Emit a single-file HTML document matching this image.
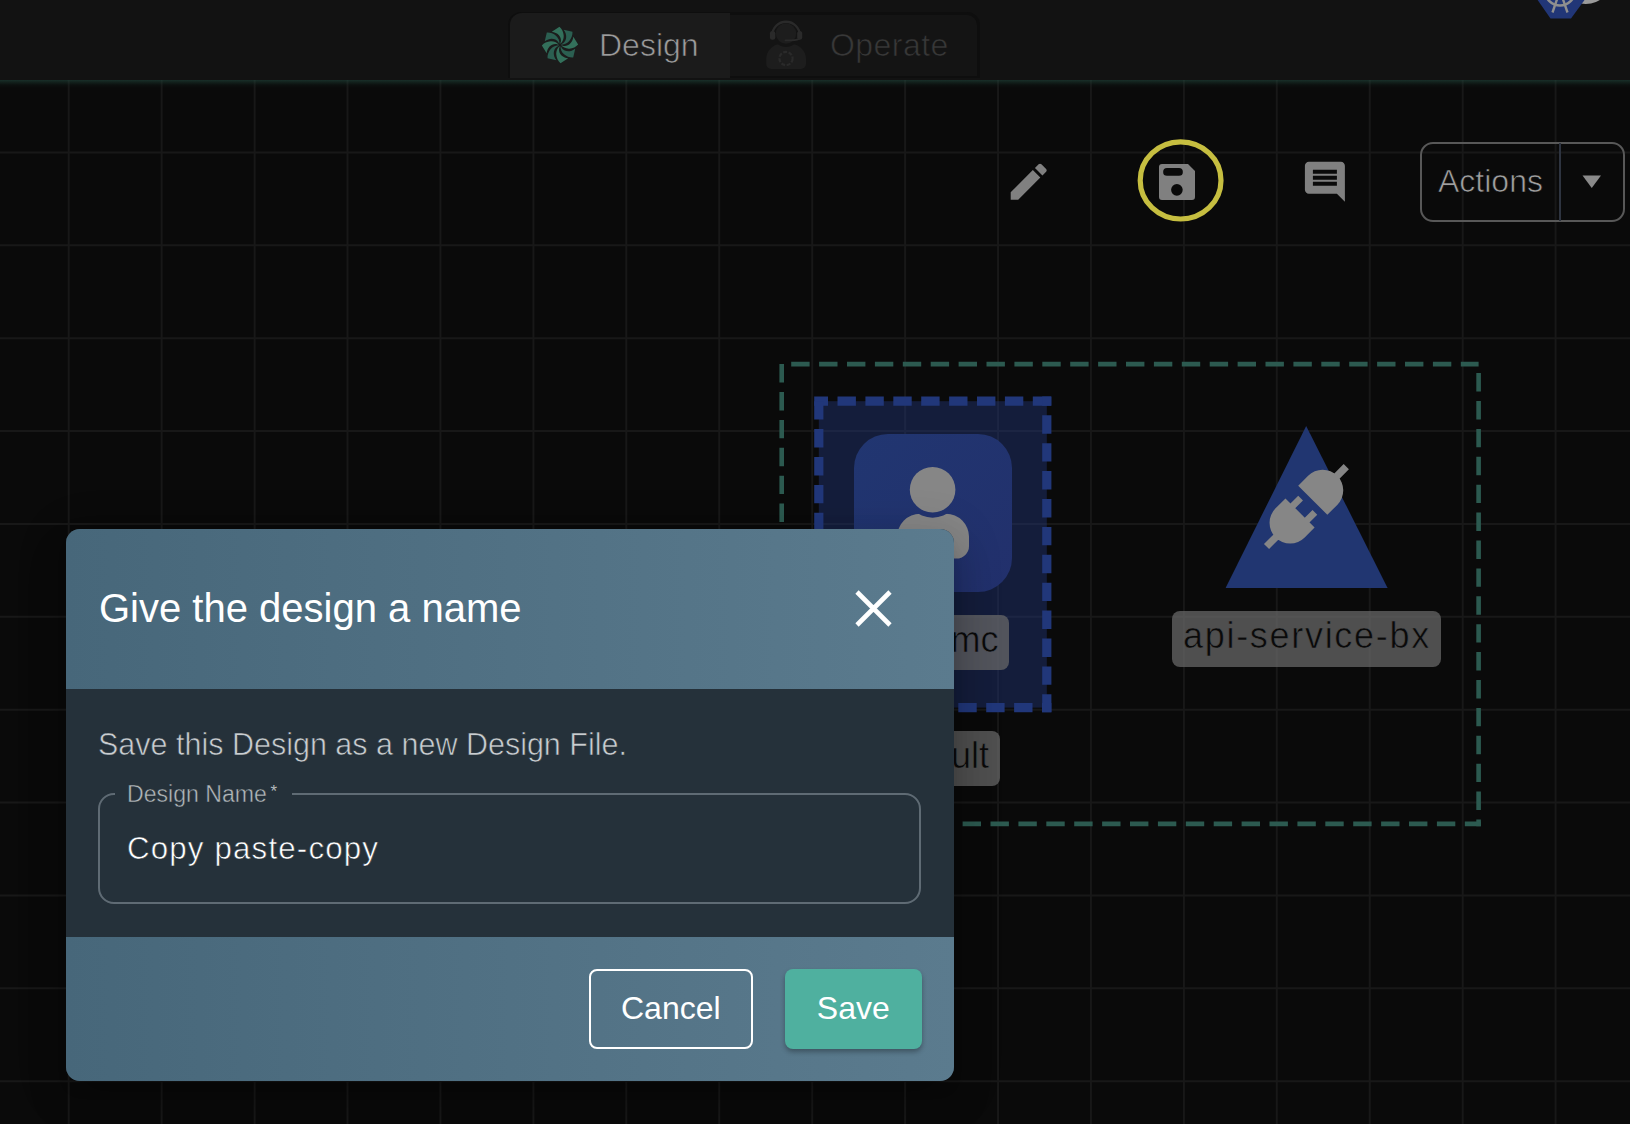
<!DOCTYPE html>
<html><head><meta charset="utf-8">
<style>
*{margin:0;padding:0;box-sizing:border-box}
html,body{width:1630px;height:1124px;overflow:hidden;background:#0a0a0a;font-family:"Liberation Sans",sans-serif}
.abs{position:absolute}
#canvas{position:absolute;left:0;top:0;width:1630px;height:1124px}
#header{position:absolute;left:0;top:0;width:1630px;height:80px;background:#121212}
#hline{position:absolute;left:0;top:80px;width:1630px;height:8px;background:linear-gradient(rgba(34,72,62,0.6) 0px,rgba(30,62,52,0.45) 2px,rgba(20,40,34,0.2) 5px,rgba(10,10,10,0) 8px)}
.tabwrap{position:absolute;left:508px;top:12px;width:472px;height:66px;border-radius:13px 13px 0 0;background:#141414;border:3px solid #0e0e0e;border-bottom-width:2px}
.tab-design{position:absolute;left:510px;top:13px;width:220px;height:65px;border-radius:12px 0 0 0;background:#1b1b1b}
.ttext{position:absolute;font-size:32px;white-space:nowrap;line-height:1}
.label{position:absolute;background:rgba(104,104,104,0.74);border-radius:8px;color:#0a0a0a;font-size:36px;line-height:1;white-space:nowrap}
#modal{position:absolute;left:66px;top:529px;width:888px;height:552px;border-radius:14px;overflow:hidden;background:#25313a;box-shadow:0 11px 15px -7px rgba(0,0,0,.2),0 24px 38px 3px rgba(0,0,0,.14),0 9px 46px 8px rgba(0,0,0,.12)}
#mhead{position:absolute;left:0;top:0;width:888px;height:160px;background:linear-gradient(90deg,#47677a,#5b7b8e)}
#mbody{position:absolute;left:0;top:160px;width:888px;height:248px;background:#25313a}
#mfoot{position:absolute;left:0;top:408px;width:888px;height:144px;background:linear-gradient(90deg,#47677a,#5b7b8e)}
</style></head><body>

<svg id="canvas" width="1630" height="1124" viewBox="0 0 1630 1124">
<g stroke="#181818" stroke-width="2" fill="none">
<line x1="68.73" y1="80" x2="68.73" y2="1124"/>
<line x1="161.66" y1="80" x2="161.66" y2="1124"/>
<line x1="254.59" y1="80" x2="254.59" y2="1124"/>
<line x1="347.52" y1="80" x2="347.52" y2="1124"/>
<line x1="440.45" y1="80" x2="440.45" y2="1124"/>
<line x1="533.38" y1="80" x2="533.38" y2="1124"/>
<line x1="626.31" y1="80" x2="626.31" y2="1124"/>
<line x1="719.24" y1="80" x2="719.24" y2="1124"/>
<line x1="812.17" y1="80" x2="812.17" y2="1124"/>
<line x1="905.10" y1="80" x2="905.10" y2="1124"/>
<line x1="998.03" y1="80" x2="998.03" y2="1124"/>
<line x1="1090.96" y1="80" x2="1090.96" y2="1124"/>
<line x1="1183.89" y1="80" x2="1183.89" y2="1124"/>
<line x1="1276.82" y1="80" x2="1276.82" y2="1124"/>
<line x1="1369.75" y1="80" x2="1369.75" y2="1124"/>
<line x1="1462.68" y1="80" x2="1462.68" y2="1124"/>
<line x1="1555.61" y1="80" x2="1555.61" y2="1124"/>
<line x1="0" y1="152.45" x2="1630" y2="152.45"/>
<line x1="0" y1="245.32" x2="1630" y2="245.32"/>
<line x1="0" y1="338.19" x2="1630" y2="338.19"/>
<line x1="0" y1="431.06" x2="1630" y2="431.06"/>
<line x1="0" y1="523.93" x2="1630" y2="523.93"/>
<line x1="0" y1="616.80" x2="1630" y2="616.80"/>
<line x1="0" y1="709.67" x2="1630" y2="709.67"/>
<line x1="0" y1="802.54" x2="1630" y2="802.54"/>
<line x1="0" y1="895.41" x2="1630" y2="895.41"/>
<line x1="0" y1="988.28" x2="1630" y2="988.28"/>
<line x1="0" y1="1081.15" x2="1630" y2="1081.15"/>
</g>
<!-- green dashed group box -->
<g stroke="#2c5a50" stroke-width="4.6" fill="none">
<line x1="781.7" y1="364.1" x2="1478.6" y2="364.1" stroke-dasharray="18.4 9.5" stroke-dashoffset="18.4"/>
<line x1="1478.6" y1="364.1" x2="1478.6" y2="826.2" stroke-dasharray="18.4 9.5" stroke-dashoffset="18.9"/>
<line x1="781.7" y1="823.9" x2="1480.9" y2="823.9" stroke-dasharray="18.4 9.5" stroke-dashoffset="14.4"/>
<line x1="781.7" y1="364.1" x2="781.7" y2="823.9" stroke-dasharray="18.4 9.5" stroke-dashoffset="0"/>
</g>
<!-- blue selected node -->
<rect x="818.8" y="401.2" width="228" height="306.4" fill="rgba(33,53,120,0.45)"/>
<g stroke="#21377a" stroke-width="9.2" fill="none">
<line x1="814.2" y1="401.2" x2="1051.4" y2="401.2" stroke-dasharray="18.4 9.5" stroke-dashoffset="4.600000000000044"/>
<line x1="1046.8" y1="396.6" x2="1046.8" y2="712.2" stroke-dasharray="18.4 9.5" stroke-dashoffset="9.20000000000001"/>
<line x1="814.2" y1="707.6" x2="1051.4" y2="707.6" stroke-dasharray="18.4 9.5" stroke-dashoffset="23.30000000000009"/>
<line x1="818.8" y1="401.2" x2="818.8" y2="712.2" stroke-dasharray="18.4 9.5" stroke-dashoffset="0"/>
</g>
<defs>
<linearGradient id="nodeg" x1="0" y1="0" x2="1" y2="1">
<stop offset="0" stop-color="#213671"/><stop offset="1" stop-color="#22306c"/>
</linearGradient>
<mask id="bodymask"><rect x="800" y="400" width="250" height="250" fill="#fff"/><circle cx="932.6" cy="489.7" r="28" fill="#000"/></mask>
</defs>
<rect x="854" y="434" width="158" height="158" rx="34" fill="url(#nodeg)"/>
<circle cx="932.6" cy="489.7" r="22.8" fill="#868686"/>
<path mask="url(#bodymask)" d="M897.2 558.6 V536.7 A23 23 0 0 1 920.2 513.7 H946 A23 23 0 0 1 969 536.7 V546 A12.6 12.6 0 0 1 956.4 558.6 Z" fill="#868686"/>
<!-- triangle node -->
<polygon points="1306.2,425.9 1387.6,588 1225.6,588" fill="#213671"/>
<path transform="translate(1306.4 506.6) rotate(-45)" fill="#868686" d="M-9 -20.6 H-23 A20.6 20.6 0 0 0 -23 20.6 H-9 Z M-9.5 -13.45 v6.7 h11.4 v-6.7 Z M-9.5 6.75 v6.7 h11.4 v-6.7 Z M-56.4 -3.6 v7.2 h22 v-7.2 Z M9 20.6 H23 A20.6 20.6 0 0 0 23 -20.6 H9 Z M34.4 -3.7 v7.4 h22 v-7.4 Z"/>
<!-- toolbar icons -->
<g fill="#808080">
<path transform="translate(1004.7 157.7) scale(2)" d="M3 17.25V21h3.75L17.81 9.94l-3.75-3.75L3 17.25zM20.71 7.04c.39-.39.39-1.02 0-1.41l-2.34-2.34c-.39-.39-1.020-.39-1.41 0l-1.83 1.83 3.75 3.75 1.83-1.83z"/>
<path fill-rule="evenodd" d="M1162 164 H1188 L1195 171 V197 Q1195 200 1192 200 H1162 Q1159 200 1159 197 V167 Q1159 164 1162 164 Z M1167 168.1 H1179 A3.85 3.85 0 0 1 1179 175.8 H1167 A3.85 3.85 0 0 1 1167 168.1 Z M1176.9 184.05 A5.8 5.8 0 1 0 1176.9 195.65 A5.8 5.8 0 1 0 1176.9 184.05 Z"/>
<path transform="translate(1300.9 157.7) scale(2)" d="M21.99 4c0-1.1-.89-2-1.990-2H4c-1.1 0-2 .9-2 2v12c0 1.1.9 2 2 2h14l4 4-.01-18zM18 14H6v-2h12v2zm0-3H6V9h12v2zm0-3H6V6h12v2z"/>
</g>
<ellipse cx="1180.6" cy="180.45" rx="40.4" ry="38.55" fill="none" stroke="#c6be40" stroke-width="5.2"/>
</svg>
<div id="hline"></div>
<div id="header"></div>
<svg class="abs" style="left:1500px;top:0" width="130" height="30" viewBox="1500 0 130 30">
<circle cx="1585.8" cy="-22.5" r="26.5" fill="#9a9a9a"/>
<path d="M1532 -8 L1550.5 18.4 H1571 L1586 -2 L1580 -10 Z" fill="#213677"/>
<circle cx="1560" cy="-9.5" r="15" stroke="#8f8f8f" stroke-width="2.6" fill="none"/>
<path d="M1560 -9.5 L1552.5 12.5 M1560 -9.5 L1567.5 12.5" stroke="#8f8f8f" stroke-width="2.4"/>
</svg>
<div class="tabwrap"></div>
<div class="tab-design"></div>
<svg class="abs" style="left:530px;top:15px" width="60" height="60" viewBox="0 0 60 60"><g transform="translate(30 30)"><path transform="rotate(0)" d="M-0.53 -18.15 L-8.19 -13.35 C-2.5 -12.6 1.6 -8.6 0.9 -3.4 L0.1 -1.2 C2.4 -2.4 3.9 -6 3.7 -9.4 C3.5 -12.8 1.8 -16.2 -0.53 -18.15 Z" fill="#33705b"/><path transform="rotate(45)" d="M-0.53 -18.15 L-8.19 -13.35 C-2.5 -12.6 1.6 -8.6 0.9 -3.4 L0.1 -1.2 C2.4 -2.4 3.9 -6 3.7 -9.4 C3.5 -12.8 1.8 -16.2 -0.53 -18.15 Z" fill="#2b5f51"/><path transform="rotate(90)" d="M-0.53 -18.15 L-8.19 -13.35 C-2.5 -12.6 1.6 -8.6 0.9 -3.4 L0.1 -1.2 C2.4 -2.4 3.9 -6 3.7 -9.4 C3.5 -12.8 1.8 -16.2 -0.53 -18.15 Z" fill="#33705b"/><path transform="rotate(135)" d="M-0.53 -18.15 L-8.19 -13.35 C-2.5 -12.6 1.6 -8.6 0.9 -3.4 L0.1 -1.2 C2.4 -2.4 3.9 -6 3.7 -9.4 C3.5 -12.8 1.8 -16.2 -0.53 -18.15 Z" fill="#2b5f51"/><path transform="rotate(180)" d="M-0.53 -18.15 L-8.19 -13.35 C-2.5 -12.6 1.6 -8.6 0.9 -3.4 L0.1 -1.2 C2.4 -2.4 3.9 -6 3.7 -9.4 C3.5 -12.8 1.8 -16.2 -0.53 -18.15 Z" fill="#33705b"/><path transform="rotate(225)" d="M-0.53 -18.15 L-8.19 -13.35 C-2.5 -12.6 1.6 -8.6 0.9 -3.4 L0.1 -1.2 C2.4 -2.4 3.9 -6 3.7 -9.4 C3.5 -12.8 1.8 -16.2 -0.53 -18.15 Z" fill="#2b5f51"/><path transform="rotate(270)" d="M-0.53 -18.15 L-8.19 -13.35 C-2.5 -12.6 1.6 -8.6 0.9 -3.4 L0.1 -1.2 C2.4 -2.4 3.9 -6 3.7 -9.4 C3.5 -12.8 1.8 -16.2 -0.53 -18.15 Z" fill="#33705b"/><path transform="rotate(315)" d="M-0.53 -18.15 L-8.19 -13.35 C-2.5 -12.6 1.6 -8.6 0.9 -3.4 L0.1 -1.2 C2.4 -2.4 3.9 -6 3.7 -9.4 C3.5 -12.8 1.8 -16.2 -0.53 -18.15 Z" fill="#2b5f51"/></g></svg>
<div class="ttext" style="left:599px;top:29px;color:#9c9c9c;-webkit-text-stroke:0.7px #1b1b1b">Design</div>
<svg class="abs" style="left:755px;top:15px" width="60" height="60" viewBox="0 0 60 60">
<defs><mask id="opm"><rect width="60" height="60" fill="#fff"/><circle cx="31" cy="18.5" r="13.5" fill="#000"/></mask></defs>
<path mask="url(#opm)" d="M11.2 49 V44 A15 15 0 0 1 26.2 29 H36 A15 15 0 0 1 51 44 V49 A5 5 0 0 1 46 54 H16.2 A5 5 0 0 1 11.2 49 Z" fill="#1d1d1d"/>
<circle cx="31" cy="18.5" r="10.2" fill="#1d1d1d"/>
<path d="M17.2 20.5 A13.8 13.8 0 0 1 44.8 20.5" stroke="#2a2a2a" stroke-width="2.4" fill="none"/>
<rect x="14.9" y="16" width="5.4" height="8.8" rx="2.5" fill="#2a2a2a"/>
<rect x="42.2" y="16" width="5" height="8.8" rx="2.5" fill="#2a2a2a"/>
<path d="M44 24 Q41 25.5 30.5 25.4" stroke="#2a2a2a" stroke-width="1.8" fill="none" stroke-linecap="round"/>
<circle cx="31" cy="43.5" r="6.6" stroke="#2a2a2a" stroke-width="2.2" fill="none" stroke-dasharray="4 1.6"/>
</svg>
<div class="ttext" style="left:830px;top:29px;color:#383838;letter-spacing:0.45px;-webkit-text-stroke:0.7px #141414">Operate</div>
<!-- actions button -->
<div class="abs" style="left:1420px;top:142px;width:205px;height:80px;border:2px solid #585858;border-radius:13px"></div>
<div class="abs" style="left:1559px;top:143px;width:2px;height:78px;background:#2e3440"></div>
<div class="ttext" style="left:1438px;top:165px;color:#a0a0a0;-webkit-text-stroke:0.7px #0a0a0a">Actions</div>
<svg class="abs" style="left:1580px;top:172px" width="24" height="20"><path d="M2.5 3.5 H21 L11.75 16 Z" fill="#8a8a8a"/></svg>
<!-- labels -->
<div class="label" style="left:900px;top:615px;width:109px;height:55px"><span class="abs" style="left:50.6px;top:6.5px;-webkit-text-stroke:0.6px #52555e">mc</span></div>
<div class="label" style="left:890px;top:731px;width:110px;height:55px"><span class="abs" style="left:60.9px;top:6.5px;-webkit-text-stroke:0.6px #505050">ult</span></div>
<div class="label" style="left:1172px;top:611px;width:269px;height:56px"><span class="abs" style="left:11px;top:6.5px;letter-spacing:1.7px;-webkit-text-stroke:0.6px #505050">api-service-bx</span></div>
<!-- modal -->
<div id="modal">
<div id="mhead">
<div class="abs" style="left:33px;top:59px;font-size:40px;line-height:1;color:#fff;white-space:nowrap">Give the design a name</div>
<svg class="abs" style="left:789px;top:61px" width="37" height="37" viewBox="0 0 37 37"><path d="M2 2 L35 35 M35 2 L2 35" stroke="#fff" stroke-width="4.6" fill="none"/></svg>
</div>
<div id="mbody">
<div class="abs" style="left:32px;top:40.3px;font-size:30.5px;line-height:1;color:#c9cdd0;white-space:nowrap;-webkit-text-stroke:0.6px #25313a">Save this Design as a new Design File.</div>
<div class="abs" style="left:32px;top:104px;width:823px;height:111px;border:2px solid #5f6b74;border-radius:16px"></div>
<div class="abs" style="left:49px;top:98px;width:177px;height:12px;background:#25313a"></div>
<div class="abs" style="left:61px;top:93.6px;font-size:23.1px;line-height:1;color:#b4b9bc;white-space:nowrap;-webkit-text-stroke:0.45px #25313a">Design Name</div>
<div class="abs" style="left:204.5px;top:93.6px;font-size:17px;line-height:1;color:#b4b9bc">*</div>
<div class="abs" style="left:61px;top:144.3px;font-size:31.3px;line-height:1;color:#fff;white-space:nowrap;letter-spacing:1.15px;-webkit-text-stroke:0.6px #25313a">Copy paste-copy</div>
</div>
<div id="mfoot">
<div class="abs" style="left:523px;top:32px;width:164px;height:80px;border:2px solid #fff;border-radius:8px"></div>
<div class="abs" style="left:555px;top:55.4px;font-size:32px;line-height:1;color:#fff;white-space:nowrap">Cancel</div>
<div class="abs" style="left:719px;top:32px;width:137px;height:80px;background:#4fb09f;border-radius:8px;box-shadow:0 3px 5px rgba(0,0,0,0.3)"></div>
<div class="abs" style="left:750.8px;top:55.4px;font-size:32px;line-height:1;color:#fff;white-space:nowrap">Save</div>
</div>
</div>
</body></html>
